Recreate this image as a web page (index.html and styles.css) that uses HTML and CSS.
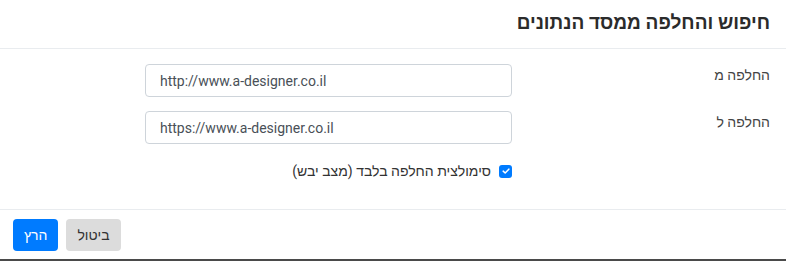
FILE: index.html
```html
<!DOCTYPE html>
<html lang="he" dir="rtl">
<head>
<meta charset="UTF-8" />
<title>חיפוש והחלפה ממסד הנתונים</title>
<link rel="stylesheet" href="styles.css">
</head>
<body>
<div class="modal">
  <div class="modal-header">
    <h5 class="modal-title">חיפוש והחלפה ממסד הנתונים</h5>
  </div>
  <div class="modal-body">
    <div class="form-row">
      <label class="form-label" for="from">החלפה מ</label>
      <input class="form-control" id="from" type="text" dir="ltr" value="http://www.a-designer.co.il" />
    </div>
    <div class="form-row">
      <label class="form-label" for="to">החלפה ל</label>
      <input class="form-control" id="to" type="text" dir="ltr" value="https://www.a-designer.co.il" />
    </div>
    <div class="form-row">
      <span></span>
      <label class="form-check">
        <span class="check-box">
          <svg viewBox="0 0 12 12" width="10" height="10"><path d="M2.6 6.2 L5 8.4 L9.4 3.8" fill="none" stroke="#fff" stroke-width="1.8" stroke-linecap="round" stroke-linejoin="round"/></svg>
        </span>
        <span>סימולצית החלפה בלבד (מצב יבש)</span>
      </label>
    </div>
  </div>
  <div class="modal-footer">
    <button class="btn btn-secondary" type="button">ביטול</button>
    <button class="btn btn-primary" type="button">הרץ</button>
  </div>
</div>
</body>
</html>
```

FILE: styles.css
```css
:root {
  --color-text: #212529;
  --color-muted: #495057;
  --color-border: #ced4da;
  --color-line: #e9ecef;
  --color-primary: #007bff;
}

*, *::before, *::after {
  box-sizing: border-box;
}

body {
  margin: 0;
  font-family: Roboto, "Liberation Sans", sans-serif;
  color: var(--color-text);
  background: #fff;
  direction: rtl;
}

.modal {
  width: 786px;
  height: 261px;
  border-bottom: 2px solid #4a4a4a;
  display: flex;
  flex-direction: column;
}

/* Header */
.modal-header {
  height: 49px;
  padding: 0 16px;
  display: flex;
  align-items: center;
  border-bottom: 1px solid var(--color-line);
}
.modal-title {
  margin: 0;
  font-size: 19px;
  font-weight: 700;
  line-height: 1.5;
  padding-bottom: 2px;
  color: #2b2b2b;
}

/* Body */
.modal-body {
  padding: 15px 16px 0;
  flex: 1;
}
.form-row {
  display: grid;
  grid-template-columns: 258px 367px 1fr;
  margin-bottom: 14px;
}
.form-label {
  font-size: 14px;
  color: #444;
  padding-top: 1px;
  line-height: 1.5;
}
.form-control {
  height: 33px;
  width: 100%;
  padding: 0 14px;
  font-family: Roboto, "Liberation Sans", sans-serif;
  font-size: 14px;
  color: var(--color-muted);
  border: 1px solid var(--color-border);
  border-radius: 4px;
  background: #fff;
  text-align: left;
}

.form-check {
  display: flex;
  align-items: center;
  gap: 8px;
  font-size: 14px;
  color: #333;
  margin-top: 5px;
}
.check-box {
  width: 13px;
  height: 13px;
  border-radius: 3px;
  background: var(--color-primary);
  display: flex;
  align-items: center;
  justify-content: center;
}

/* Footer */
.modal-footer {
  border-top: 1px solid var(--color-line);
  height: 50px;
  padding: 9px 13px 0;
  display: flex;
  flex-direction: row-reverse;
  justify-content: flex-end;
  gap: 8px;
  direction: ltr;
}
.btn {
  height: 32px;
  padding: 0 11px;
  border: none;
  border-radius: 4px;
  font-family: Roboto, "Liberation Sans", sans-serif;
  font-size: 14px;
  cursor: pointer;
}
.btn-primary {
  background: var(--color-primary);
  color: #fff;
}
.btn-secondary {
  background: #dcdcdc;
  color: #333;
}
```
